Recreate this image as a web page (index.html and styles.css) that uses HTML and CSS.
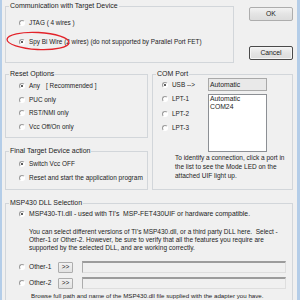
FILE: index.html
```html
<!DOCTYPE html>
<html>
<head>
<meta charset="utf-8">
<link rel="stylesheet" href="styles.css">
</head>
<body>
<div class="window">
  <div class="row1">
    <fieldset class="grp comm">
      <legend>Communication with Target Device</legend>
      <div class="opt o-jtag"><span class="radio"></span>JTAG ( 4 wires )</div>
      <div class="opt o-sbw"><span class="radio on"></span>Spy Bi Wire (2 wires) (do not supported by Parallel Port FET)</div>
      <svg class="mark" width="66" height="22" viewBox="0 0 66 22"><ellipse cx="32" cy="11" rx="31" ry="8.5" transform="rotate(3 32 11)"/></svg>
    </fieldset>
    <div class="buttons">
      <button class="btn">OK</button>
      <button class="btn default">Cancel</button>
    </div>
  </div>

  <div class="row2">
    <div class="col-left">
      <fieldset class="grp reset">
        <legend>Reset Options</legend>
        <div class="opt r1"><span class="radio on"></span>Any<span class="rec">[ Recommended ]</span></div>
        <div class="opt r2"><span class="radio"></span>PUC only</div>
        <div class="opt r3"><span class="radio"></span>RST/NMI only</div>
        <div class="opt r4"><span class="radio"></span>Vcc Off/On only</div>
      </fieldset>
      <fieldset class="grp final">
        <legend>Final Target Device action</legend>
        <div class="opt f1"><span class="radio on"></span>Switch Vcc OFF</div>
        <div class="opt f2"><span class="radio"></span>Reset and start the application program</div>
      </fieldset>
    </div>
    <fieldset class="grp com">
      <legend>COM Port</legend>
      <div class="com-top">
        <div class="ports">
          <div class="opt p1"><span class="radio on"></span>USB --&gt;</div>
          <div class="opt p2"><span class="radio"></span>LPT-1</div>
          <div class="opt p3"><span class="radio"></span>LPT-2</div>
          <div class="opt p4"><span class="radio"></span>LPT-3</div>
        </div>
        <div class="boxes">
          <div class="auto">Automatic</div>
          <div class="list"><div>Automatic</div><div>COM24</div></div>
        </div>
      </div>
      <p class="info">To identify a connection, click a port in<br>the list to see the Mode LED on the<br>attached UIF light up.</p>
    </fieldset>
  </div>

  <fieldset class="grp dll">
    <legend>MSP430 DLL Selection</legend>
    <div class="opt d1"><span class="radio on"></span>MSP430-TI.dll - used with TI's&nbsp; MSP-FET430UIF or hardware compatible.</div>
    <p class="note">You can select different versions of TI's MSP430.dll, or a third party DLL here.&nbsp; Select -<br>Other-1 or Other-2. However, be sure to verify that all the features you require are<br>supported by the selected DLL, and are working correctly.</p>
    <div class="other o1"><span class="radio"></span><span class="olabel">Other-1</span><button class="bbtn">&gt;&gt;</button><div class="field"></div></div>
    <div class="other o2"><span class="radio"></span><span class="olabel">Other-2</span><button class="bbtn">&gt;&gt;</button><div class="field"></div></div>
    <p class="browse">Browse full path and name of the MSP430.dll file supplied with the adapter you have.</p>
  </fieldset>
</div>
</body>
</html>
```

FILE: styles.css
```css
html, body {
  margin: 0;
  padding: 0;
}
body {
  background: #f0f0f0;
  font-family: "Liberation Sans", Arial, sans-serif;
  font-size: 6.5px;
  line-height: 8px;
  color: #1c1c1c;
}
.window {
  width: 300px;
  height: 300px;
  box-sizing: border-box;
  border-left: 2px solid #b4cde8;
  border-right: 3px solid #b4cde8;
  padding-left: 3px;
  overflow: hidden;
}
.grp {
  margin: 0;
  padding: 0;
  border: 1px solid #d2d6da;
  box-sizing: border-box;
  min-width: 0;
  position: relative;
}
.grp legend {
  margin-left: 3px;
  padding: 0 1px;
  line-height: 8px;
  font-size: 7px;
}
p { margin: 0; }

.opt {
  display: flex;
  align-items: center;
  height: 8px;
  white-space: nowrap;
  margin-left: 13px;
  font-size: 6.4px;
}
.radio {
  flex: none;
  width: 6px;
  height: 6px;
  box-sizing: border-box;
  border-radius: 50%;
  border: 1px solid;
  border-color: #9a9a9a #ffffff #ffffff #9a9a9a;
  background: #fff;
  margin-right: 4px;
  position: relative;
}
.radio.on::after {
  content: "";
  position: absolute;
  left: 1px;
  top: 1px;
  width: 2px;
  height: 2px;
  border-radius: 50%;
  background: #2a2a2a;
}

/* row 1 */
.row1 {
  display: flex;
  padding-top: 2px;
}
.comm {
  width: 229px;
  height: 61px;
}
.o-jtag { margin-top: 9px; }
.o-sbw { margin-top: 11px; }
.mark {
  position: absolute;
  left: 0;
  top: 20px;
  overflow: visible;
}
.mark ellipse {
  fill: none;
  stroke: #e3232a;
  stroke-width: 1.3;
}
.buttons {
  display: flex;
  flex-direction: column;
  margin-left: 15px;
  padding-top: 5px;
}
.btn {
  width: 44px;
  height: 14px;
  padding: 0;
  font: inherit;
  font-size: 6.8px;
  color: #1c1c1c;
  border: 1px solid #adadad;
  border-radius: 2px;
  background: linear-gradient(#f3f3f3, #e4e4e4 50%, #dcdcdc);
}
.btn.default {
  margin-top: 25px;
  border-color: #4a4a4a;
  box-shadow: inset 0 0 0 1px #f5f5f5;
}

/* row 2 */
.row2 {
  display: flex;
  margin-top: 7px;
}
.col-left {
  display: flex;
  flex-direction: column;
  width: 143px;
}
.reset { height: 68px; }
.r1 { margin-top: 4px; }
.r2 { margin-top: 6px; }
.r3 { margin-top: 5px; }
.r4 { margin-top: 6px; }
.rec { margin-left: 6px; }
.final {
  height: 43px;
  margin-top: 9px;
}
.f1 { margin-top: 5px; }
.f2 { margin-top: 6px; font-size: 6.5px; }

.com {
  width: 141px;
  height: 120px;
  margin-left: 4px;
}
.com-top { display: flex; }
.ports {
  width: 46px;
  margin-left: 9px;
}
.ports .opt { margin-left: 0; }
.p1 { margin-top: 3px; }
.p2 { margin-top: 6px; }
.p3 { margin-top: 7px; }
.p4 { margin-top: 6px; }
.boxes {
  display: flex;
  flex-direction: column;
  width: 59px;
}
.auto {
  height: 13px;
  box-sizing: border-box;
  border: 1px solid #a9a9a9;
  background: #e9e9e9;
  padding-left: 1px;
  line-height: 11px;
  font-size: 6.8px;
}
.list {
  height: 58px;
  box-sizing: border-box;
  margin-top: 3px;
  border: 1px solid #8c8f94;
  background: #fff;
  padding: 0 1px;
  line-height: 8px;
  font-size: 6.8px;
}
.info {
  margin: 1px 0 0 22px;
  line-height: 9px;
  white-space: nowrap;
  font-size: 6.5px;
}

/* row 3 */
.dll {
  width: 288px;
  height: 110px;
  margin-top: 9px;
}
.d1 { margin-top: 3px; font-size: 6.8px; }
.note {
  margin: 10px 0 0 23px;
  line-height: 8px;
  white-space: nowrap;
  font-size: 6.5px;
}
.other {
  display: flex;
  align-items: center;
  height: 12px;
  margin-left: 13px;
  font-size: 6.6px;
}
.o1 { margin-top: 9px; }
.o2 { margin-top: 4px; }
.olabel {
  width: 29px;
  flex: none;
}
.bbtn {
  width: 15px;
  height: 11px;
  padding: 0;
  font: inherit;
  font-size: 6.5px;
  color: #1c1c1c;
  border: 1px solid #adadad;
  border-radius: 1px;
  background: linear-gradient(#f2f2f2, #e2e2e2);
  margin-right: 9px;
  flex: none;
}
.field {
  width: 204px;
  height: 12px;
  box-sizing: border-box;
  border-top: 2px solid #9c9c9c;
  border-left: 1px solid #acacac;
  border-right: 1px solid #dedede;
  border-bottom: 1px solid #dedede;
  background: #f0f0f0;
}
.browse {
  margin: 3px 0 0 25px;
  white-space: nowrap;
  font-size: 6.2px;
}
```
